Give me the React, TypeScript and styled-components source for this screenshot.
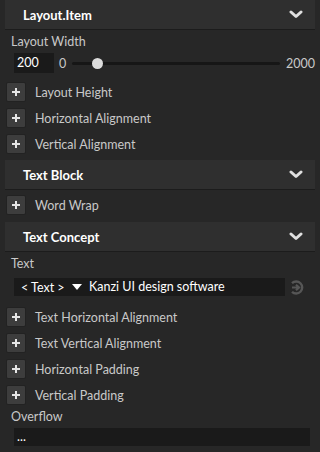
import styled, { createGlobalStyle } from "styled-components";

const GlobalStyle = createGlobalStyle`
    body {
        margin: 0;
        background: #272727;
        font-family: Lato, "Noto Sans", sans-serif;
    }
`;

const Panel = styled.div`
    width: 320px;
    height: 452px;
    padding: 0 5px;
    box-sizing: border-box;
    background: #272727;
    overflow: hidden;
`;

const Header = styled.div`
    height: 29px;
    border-bottom: 1px solid #1c1c1c;
    background: #2f2f2f;
    display: flex;
    align-items: center;
    justify-content: space-between;
    padding: 0 12px 0 18px;
    color: #ffffff;
    font-weight: 700;
    font-size: 13px;
`;

const Body = styled.div<{ $top: number; $bottom: number }>`
    display: flex;
    flex-direction: column;
    padding: ${(p) => p.$top}px 0 ${(p) => p.$bottom}px 1px;
`;

const Label = styled.div<{ $after: number }>`
    color: #c9c9c9;
    font-size: 12.5px;
    line-height: 16px;
    padding-left: 5px;
    margin-bottom: ${(p) => p.$after}px;
`;

const WidthRow = styled.div`
    display: flex;
    align-items: center;
    height: 20px;
    padding-left: 8px;
    margin-bottom: 9px;
    color: #c9c9c9;
    font-size: 12.5px;
`;

const NumberBox = styled.div`
    width: 37px;
    height: 20px;
    padding-left: 3px;
    background: #1a1a1a;
    color: #ffffff;
    font-size: 12.5px;
    line-height: 20px;
`;

const Track = styled.div`
    flex: 1;
    height: 3px;
    margin: 0 6px;
    background: #161616;
    border-radius: 2px;
    position: relative;
`;

const Knob = styled.div`
    position: absolute;
    left: 20px;
    top: -4px;
    width: 11px;
    height: 11px;
    border-radius: 50%;
    background: #dcdcdc;
`;

const Rows = styled.div`
    display: flex;
    flex-direction: column;
    gap: 6px;
`;

const Row = styled.div`
    display: flex;
    align-items: center;
    height: 20px;
    gap: 9px;
    color: #c9c9c9;
    font-size: 12.5px;
`;

const PlusButton = styled.div`
    width: 20px;
    height: 20px;
    box-sizing: border-box;
    border: 1px solid #222222;
    border-radius: 2px;
    background: #3d3d3d;
    display: flex;
    align-items: center;
    justify-content: center;
`;

const TextRow = styled.div`
    display: flex;
    align-items: center;
    height: 18px;
    padding-left: 8px;
    margin-bottom: 11px;
`;

const Combo = styled.div`
    width: 72px;
    height: 18px;
    box-sizing: border-box;
    padding: 0 4px 0 7px;
    background: #1a1a1a;
    color: #ffffff;
    font-size: 12.5px;
    display: flex;
    align-items: center;
    justify-content: space-between;
`;

const TextField = styled.div<{ $width: number }>`
    width: ${(p) => p.$width}px;
    height: 18px;
    box-sizing: border-box;
    padding-left: 3px;
    background: #1a1a1a;
    color: #ffffff;
    font-size: 12.5px;
    line-height: 18px;
`;

const GoIcon = styled.div`
    margin-left: 4px;
    display: flex;
`;

const OverflowRow = styled.div`
    padding-left: 8px;
`;

function Chevron() {
    return (
        <svg width="14" height="9" viewBox="0 0 14 9">
            <path d="M2 2 L7 6.5 L12 2" fill="none" stroke="#e0e0e0" strokeWidth="3" strokeLinecap="round" strokeLinejoin="round" />
        </svg>
    );
}

function Plus() {
    return (
        <svg width="10" height="10" viewBox="0 0 10 10">
            <path d="M5 1 V9 M1 5 H9" stroke="#e6e6e6" strokeWidth="2" />
        </svg>
    );
}

function Section({ title }: { title: string }) {
    return (
        <Header>
            <span>{title}</span>
            <Chevron />
        </Header>
    );
}

function PropRow({ name }: { name: string }) {
    return (
        <Row>
            <PlusButton>
                <Plus />
            </PlusButton>
            <span>{name}</span>
        </Row>
    );
}

export default function App() {
    return (
        <>
            <GlobalStyle />
            <Panel>
                <Section title="Layout.Item" />
                <Body $top={4} $bottom={6}>
                    <Label $after={3}>Layout Width</Label>
                    <WidthRow>
                        <NumberBox>200</NumberBox>
                        <span style={{ marginLeft: 5 }}>0</span>
                        <Track>
                            <Knob />
                        </Track>
                        <span>2000</span>
                    </WidthRow>
                    <Rows>
                        <PropRow name="Layout Height" />
                        <PropRow name="Horizontal Alignment" />
                        <PropRow name="Vertical Alignment" />
                    </Rows>
                </Body>
                <Section title="Text Block" />
                <Body $top={5} $bottom={7}>
                    <Rows>
                        <PropRow name="Word Wrap" />
                    </Rows>
                </Body>
                <Section title="Text Concept" />
                <Body $top={4} $bottom={0}>
                    <Label $after={6}>Text</Label>
                    <TextRow>
                        <Combo>
                            <span>&lt; Text &gt;</span>
                            <svg width="10" height="6" viewBox="0 0 10 6">
                                <path d="M0 0 H10 L5 6 Z" fill="#ffffff" />
                            </svg>
                        </Combo>
                        <TextField $width={199}>Kanzi UI design software</TextField>
                        <GoIcon>
                            <svg width="15" height="15" viewBox="0 0 15 15">
                                <path d="M3 3.2 A6 6 0 1 1 3 11.8" fill="none" stroke="#565656" strokeWidth="2.4" />
                                <path d="M3 7.5 H9 M7 4.8 L10 7.5 L7 10.2" fill="none" stroke="#565656" strokeWidth="2.2" />
                            </svg>
                        </GoIcon>
                    </TextRow>
                    <Rows>
                        <PropRow name="Text Horizontal Alignment" />
                        <PropRow name="Text Vertical Alignment" />
                        <PropRow name="Horizontal Padding" />
                        <PropRow name="Vertical Padding" />
                    </Rows>
                    <Label $after={3} style={{ marginTop: 4 }}>Overflow</Label>
                    <OverflowRow>
                        <TextField $width={296}>...</TextField>
                    </OverflowRow>
                </Body>
            </Panel>
        </>
    );
}
